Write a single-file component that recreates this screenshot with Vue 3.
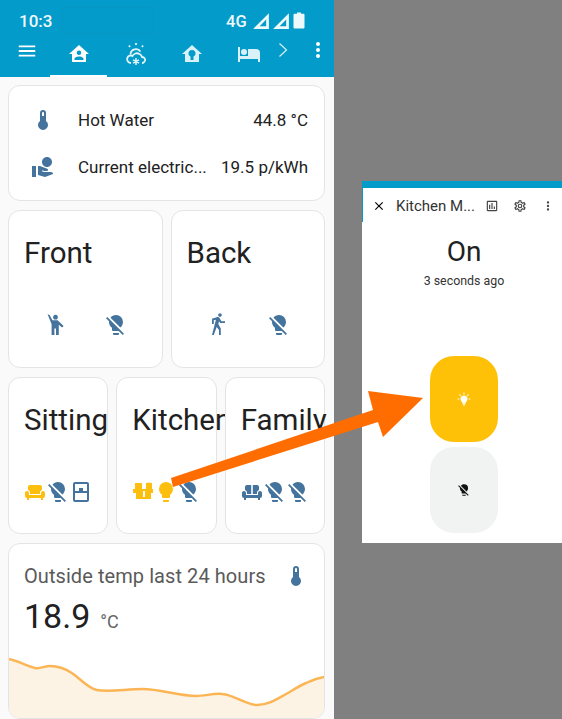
<script setup>
const icons = {
  thermo: "M15,13V5A3,3 0 0,0 9,5V13A5,5 0 1,0 15,13M12,4A1,1 0 0,1 13,5V8H11V5A1,1 0 0,1 12,4Z",
  hand: "M16 12C18.76 12 21 9.76 21 7S18.76 2 16 2 11 4.24 11 7 13.24 12 16 12M21.45 17.6C21.06 17.2 20.57 17 20 17H13L10.92 16.27L11.25 15.33L13 16H15.8C16.15 16 16.43 15.86 16.66 15.63S17 15.12 17 14.81C17 14.27 16.74 13.9 16.22 13.69L8.95 11H7V20L14 22L22.03 19C22.04 18.47 21.84 18 21.45 17.6M5 11H.984V22H5V11Z",
  bulbOff: "M12,2C9.76,2 7.78,3.05 6.5,4.68L16.31,14.5C17.94,13.21 19,11.24 19,9A7,7 0 0,0 12,2M3.28,4L2,5.27L5.04,8.3C5,8.53 5,8.76 5,9C5,11.38 6.19,13.47 8,14.74V17A1,1 0 0,0 9,18H14.73L18.73,22L20,20.72L3.28,4M9,20V21A1,1 0 0,0 10,22H14A1,1 0 0,0 15,21V20H9Z",
  bulb: "M12,2A7,7 0 0,0 5,9C5,11.38 6.19,13.47 8,14.74V17A1,1 0 0,0 9,18H15A1,1 0 0,0 16,17V14.74C17.81,13.47 19,11.38 19,9A7,7 0 0,0 12,2M9,21A1,1 0 0,0 10,22H14A1,1 0 0,0 15,21V20H9V21Z",
  bulbOn: "M12,6A6,6 0 0,1 18,12C18,14.22 16.79,16.16 15,17.2V19A1,1 0 0,1 14,20H10A1,1 0 0,1 9,19V17.2C7.21,16.16 6,14.22 6,12A6,6 0 0,1 12,6M14,21V22A1,1 0 0,1 13,23H11A1,1 0 0,1 10,22V21H14M20,11H23V13H20V11M1,11H4V13H1V11M13,1V4H11V1H13M4.92,3.5L7.05,5.64L5.63,7.05L3.5,4.93L4.92,3.5M16.95,5.63L19.07,3.5L20.5,4.93L18.36,7.05L16.95,5.63Z",
  greet: "M12.5,1.8A2.4,2.4 0 1,1 12.49,1.8M4.6,1.2L6.6,2L9.4,7.2H14.6L20.6,13L19,14.6L15.8,11.8V22H13V15.6H11.4V22H8.6V11.2Z",
  walk: "M14.12,10H19V8.2H15.38L13.38,4.87C13.08,4.37 12.54,4.03 11.92,4.03C11.74,4.03 11.58,4.06 11.42,4.11L6,5.8V11H7.8V7.33L9.91,6.67L6,22H7.8L10.67,13.89L13,17V22H14.8V15.59L12.31,11.05L13.04,8.18M14,3.8C15,3.8 15.8,3 15.8,2C15.8,1 15,0.2 14,0.2C13,0.2 12.2,1 12.2,2C12.2,3 13,3.8 14,3.8Z",
  armchair: "M7 5C5.9 5 5 5.9 5 7V10.1C6.2 10.5 7 11.6 7 12.9V14H17V12.9C17 11.6 17.8 10.5 19 10.1V7C19 5.9 18.1 5 17 5H7M4 11C2.9 11 2 11.9 2 13V16C2 17.1 2.9 18 4 18V20H6V18H18V20H20V18C21.1 18 22 17.1 22 16V13C22 11.9 21.1 11 20 11S18 11.9 18 13V15H6V13C6 11.9 5.1 11 4 11Z",
  sofa: "M7 5C5.9 5 5 5.9 5 7V10.1C6.2 10.5 7 11.6 7 12.9V14H11.2V5H7M12.8 5V14H17V12.9C17 11.6 17.8 10.5 19 10.1V7C19 5.9 18.1 5 17 5H12.8M4 11C2.9 11 2 11.9 2 13V16C2 17.1 2.9 18 4 18V20H6V18H18V20H20V18C21.1 18 22 17.1 22 16V13C22 11.9 21.1 11 20 11S18 11.9 18 13V15H6V13C6 11.9 5.1 11 4 11Z",
  fridge: "M6,2H18A2,2 0 0,1 20,4V20A2,2 0 0,1 18,22H6A2,2 0 0,1 4,20V4A2,2 0 0,1 6,2M6,4V11H10V8H14V11H18V4H6M6,13V20H18V13H6Z",
  door: "M4,3H11V9H15V3C17,2.6 19,2.6 21,3V9H22V13H20V19H5V13H2V9H4V3M12,11V17H14V11H12Z",
  menu: "M3,6H21V8H3V6M3,11H21V13H3V11M3,16H21V18H3V16Z",
  dots: "M12,16A2,2 0 0,1 14,18A2,2 0 0,1 12,20A2,2 0 0,1 10,18A2,2 0 0,1 12,16M12,10A2,2 0 0,1 14,12A2,2 0 0,1 12,14A2,2 0 0,1 10,12A2,2 0 0,1 12,10M12,4A2,2 0 0,1 14,6A2,2 0 0,1 12,8A2,2 0 0,1 10,6A2,2 0 0,1 12,4Z",
  homeAccount: "M12,3L2,12H5V20H19V12H22L12,3M12,8.5A2.25,2.25 0 0,1 14.25,10.75A2.25,2.25 0 0,1 12,13A2.25,2.25 0 0,1 9.75,10.75A2.25,2.25 0 0,1 12,8.5M12,14.5C13.5,14.5 16.5,15.25 16.5,16.75V18H7.5V16.75C7.5,15.25 10.5,14.5 12,14.5Z",
  homeBulb: "M12,3L2,12H5V20H19V12H22L12,3M12,8A3.5,3.5 0 0,1 15.5,11.5C15.5,12.8 14.8,13.8 13.5,14.5V18H10.5V14.5C9.2,13.8 8.5,12.8 8.5,11.5A3.5,3.5 0 0,1 12,8Z",
  bed: "M19,7H11V14H3V5H1V20H3V17H21V20H23V11A4,4 0 0,0 19,7M7,13A3,3 0 0,0 10,10A3,3 0 0,0 7,7A3,3 0 0,0 4,10A3,3 0 0,0 7,13Z",
  close: "M19,6.41L17.59,5L12,10.59L6.41,5L5,6.41L10.59,12L5,17.59L6.41,19L12,13.41L17.59,19L19,17.59L13.41,12L19,6.41Z",
  chart: "M9 17H7V10H9V17M13 17H11V7H13V17M17 17H15V13H17V17M19 19H5V5H19V19.1M19 3H5C3.9 3 3 3.9 3 5V19C3 20.1 3.9 21 5 21H19C20.1 21 21 20.1 21 19V5C21 3.9 20.1 3 19 3Z",
  cog: "M12,8A4,4 0 0,1 16,12A4,4 0 0,1 12,16A4,4 0 0,1 8,12A4,4 0 0,1 12,8M12,10A2,2 0 0,0 10,12A2,2 0 0,0 12,14A2,2 0 0,0 14,12A2,2 0 0,0 12,10M10,22C9.75,22 9.54,21.82 9.5,21.58L9.13,18.93C8.5,18.68 7.96,18.34 7.44,17.94L4.95,18.95C4.73,19.03 4.46,18.95 4.34,18.73L2.34,15.27C2.21,15.05 2.27,14.78 2.46,14.63L4.57,12.97L4.5,12L4.57,11L2.46,9.37C2.27,9.22 2.21,8.95 2.34,8.73L4.34,5.27C4.46,5.05 4.73,4.96 4.95,5.05L7.44,6.05C7.96,5.66 8.5,5.32 9.13,5.07L9.5,2.42C9.54,2.18 9.75,2 10,2H14C14.25,2 14.46,2.18 14.5,2.42L14.87,5.07C15.5,5.32 16.04,5.66 16.56,6.05L19.05,5.05C19.27,4.96 19.54,5.05 19.66,5.27L21.66,8.73C21.79,8.95 21.73,9.22 21.54,9.37L19.43,11L19.5,12L19.43,13L21.54,14.63C21.73,14.78 21.79,15.05 21.66,15.27L19.66,18.73C19.54,18.95 19.27,19.04 19.05,18.95L16.56,17.95C16.04,18.34 15.5,18.68 14.87,18.93L14.5,21.58C14.46,21.82 14.25,22 14,22H10M11.25,4L10.88,6.61C9.68,6.86 8.62,7.5 7.85,8.39L5.44,7.35L4.69,8.65L6.8,10.2C6.4,11.37 6.4,12.64 6.8,13.8L4.68,15.36L5.43,16.66L7.86,15.62C8.63,16.5 9.68,17.14 10.87,17.38L11.24,20H12.76L13.13,17.39C14.32,17.14 15.37,16.5 16.14,15.62L18.57,16.66L19.32,15.36L17.2,13.81C17.6,12.64 17.6,11.37 17.2,10.2L19.31,8.65L18.56,7.35L16.15,8.39C15.38,7.5 14.32,6.86 13.12,6.62L12.75,4H11.25Z",
}

const bigCards = [
  { name: "Front", icons: ["greet", "bulbOff"] },
  { name: "Back", icons: ["walk", "bulbOff"] },
]

const smallCards = [
  { name: "Sitting", icons: [{ d: "armchair", on: true }, { d: "bulbOff" }, { d: "fridge" }] },
  { name: "Kitchen", icons: [{ d: "door", on: true }, { d: "bulb", on: true }, { d: "bulbOff" }] },
  { name: "Family", icons: [{ d: "sofa" }, { d: "bulbOff" }, { d: "bulbOff" }] },
]

const sparkLine = "M0 1C9 3 18 8 26 10C31 11 36 8 41 8C50 8 57 11 63 15C72 21 79 30 88 32C100 34.5 118 31 134 31C152 31 170 38 188 38C197 38 205 35 214 36C226 37 238 47 249 47C260 47 269 41 278 36C285 32 291 28 298 25C304 22 310 20 316 19"
</script>

<template>
  <main class="page">
    <section class="phone">
      <header class="appbar">
        <div class="status">
          <span class="time">10:3</span>
          <span class="notch"></span>
          <span class="net">4G</span>
          <svg class="signal" viewBox="0 0 16 16"><path d="M15 1V15H1ZM12.6 6.6L6.8 12.6H12.6Z" fill-rule="evenodd" /></svg>
          <svg class="signal" viewBox="0 0 16 16"><path d="M15 1V15H1ZM12.6 6.6L6.8 12.6H12.6Z" fill-rule="evenodd" /></svg>
          <svg class="battery" viewBox="0 0 12 16"><path d="M4 0H8V1.2H10.5A1 1 0 0 1 11.5 2.2V15A1 1 0 0 1 10.5 16H1.5A1 1 0 0 1 .5 15V2.2A1 1 0 0 1 1.5 1.2H4Z" /></svg>
        </div>
        <nav class="tabs">
          <svg class="menu" viewBox="0 0 24 24"><path :d="icons.menu" /></svg>
          <div class="tab active"><svg viewBox="0 0 24 24"><path :d="icons.homeAccount" fill-rule="evenodd" /></svg></div>
          <div class="tab">
            <svg class="weather" viewBox="0 0 24 24" fill="none" stroke="#e3f5fa" stroke-width="1.8">
              <path d="M6.5 12.5A5.5 5.5 0 0 1 16.5 9.5" />
              <path d="M7 21C3.5 21 2.5 17.5 3.5 15.5C4.5 13.5 7 13 8.5 14C9.5 11.5 13 10.5 15.5 12C17 12.8 17.8 14 18 15C20.5 15 21.5 17 21 18.5C20.5 20 19.5 21 18 21" />
              <path d="M12 1V3M5 3.5L6 5M19 3.5L18 5" />
              <path d="M12 16V23M9 17.8L15 21.2M15 17.8L9 21.2" stroke-width="1.5" />
            </svg>
          </div>
          <div class="tab dim"><svg viewBox="0 0 24 24"><path :d="icons.homeBulb" fill-rule="evenodd" /></svg></div>
          <div class="tab dim"><svg viewBox="0 0 24 24"><path :d="icons.bed" /></svg></div>
          <svg class="chevron" viewBox="0 0 12 16" fill="none" stroke="#d9f1f8" stroke-width="1.2"><path d="M2.5 1.5L9.5 8L2.5 14.5" /></svg>
          <svg class="dots" viewBox="0 0 24 24"><path :d="icons.dots" /></svg>
        </nav>
      </header>

      <div class="content">
        <div class="card entities">
          <div class="entity">
            <svg class="ico entity-ico" viewBox="0 0 24 24"><path :d="icons.thermo" /></svg>
            <span class="entity-name">Hot Water</span>
            <span class="entity-value">44.8 °C</span>
          </div>
          <div class="entity">
            <svg class="ico entity-ico" viewBox="0 0 24 24"><path :d="icons.hand" /></svg>
            <span class="entity-name">Current electric...</span>
            <span class="entity-value">19.5 p/kWh</span>
          </div>
        </div>

        <div class="row two">
          <div v-for="c in bigCards" :key="c.name" class="card room big">
            <div class="room-name">{{ c.name }}</div>
            <div class="room-icons wide">
              <svg v-for="(ic, i) in c.icons" :key="i" class="ico" viewBox="0 0 24 24"><path :d="icons[ic]" /></svg>
            </div>
          </div>
        </div>

        <div class="row three">
          <div v-for="c in smallCards" :key="c.name" class="card room small">
            <div class="room-name">{{ c.name }}</div>
            <div class="room-icons">
              <svg v-for="(ic, i) in c.icons" :key="i" class="ico" :class="{ on: ic.on }" viewBox="0 0 24 24"><path :d="icons[ic.d]" fill-rule="evenodd" /></svg>
            </div>
          </div>
        </div>

        <div class="card graph">
          <div class="graph-head">
            <span>Outside temp last 24 hours</span>
            <svg class="ico" viewBox="0 0 24 24"><path :d="icons.thermo" /></svg>
          </div>
          <div class="graph-value"><span class="num">18.9</span><span class="unit">°C</span></div>
          <svg class="spark" viewBox="0 0 316 60" preserveAspectRatio="none">
            <path :d="sparkLine + 'V60H0Z'" fill="#fdf3e4" />
            <path :d="sparkLine" fill="none" stroke="#fbb554" stroke-width="2.5" />
          </svg>
        </div>
      </div>
    </section>

    <section class="dialog">
      <div class="dialog-strip"></div>
      <div class="dialog-bar">
        <svg viewBox="0 0 24 24" class="d-close"><path :d="icons.close" /></svg>
        <span class="d-title">Kitchen M...</span>
        <svg viewBox="0 0 24 24" class="d-ico"><path :d="icons.chart" /></svg>
        <svg viewBox="0 0 24 24" class="d-ico"><path :d="icons.cog" /></svg>
        <svg viewBox="0 0 24 24" class="d-ico"><path :d="icons.dots" /></svg>
      </div>
      <div class="d-state">On</div>
      <div class="d-ago">3 seconds ago</div>
      <div class="toggle on">
        <svg viewBox="0 0 24 24"><path :d="icons.bulbOn" /></svg>
      </div>
      <div class="toggle off">
        <svg viewBox="0 0 24 24"><path :d="icons.bulbOff" /></svg>
      </div>
    </section>

    <svg class="arrow" viewBox="0 0 562 719">
      <path d="M171 478L373 410L368 391L423 398L383 437L378 422L173 487Z" fill="#ff6d00" />
    </svg>
  </main>
</template>

<style scoped>
.page {
  position: relative;
  width: 562px;
  height: 719px;
  overflow: hidden;
  background: #808080;
  font-family: Roboto, "Liberation Sans", sans-serif;
  color: #212121;
}

.phone {
  width: 334px;
  height: 719px;
  background: #fafafa;
  overflow: hidden;
}

.appbar {
  height: 77px;
  background: #039bc9;
  color: #fff;
}

.status {
  display: flex;
  align-items: center;
  height: 40px;
  padding: 2px 0 0 19px;
  box-sizing: border-box;
}

.time {
  width: 43px;
  font-size: 17px;
  font-weight: 500;
  color: #eef9fc;
}

.notch {
  width: 91px;
  height: 27px;
  margin-top: -2px;
  box-sizing: border-box;
  border: 1px solid #0897c3;
}

.net {
  margin-left: 73px;
  font-size: 16.5px;
  font-weight: 500;
  color: #eef9fc;
}

.signal {
  width: 18px;
  height: 18px;
  margin-left: 2px;
  fill: #eef9fc;
}

.signal:first-of-type {
  margin-left: 5px;
}

.battery {
  width: 12px;
  height: 17px;
  margin-left: 3px;
  margin-top: -2px;
  fill: #eef9fc;
}

.tabs {
  display: flex;
  height: 37px;
  position: relative;
}

.tabs svg {
  fill: #fff;
}

.menu {
  width: 22px;
  height: 22px;
  margin: 0 0 0 16px;
}

.tab {
  width: 57px;
  height: 37px;
  box-sizing: border-box;
  display: flex;
  justify-content: center;
  padding-top: 2px;
}

.tab svg {
  width: 24px;
  height: 24px;
}

.tab:first-of-type {
  margin-left: 12px;
}

.tab:nth-of-type(3),
.tab:nth-of-type(4) {
  position: relative;
  left: -1px;
}

.tab.active {
  border-bottom: 2px solid #fff;
}

.tab.dim svg {
  fill: #d9f1f8;
}

.tabs .weather {
  fill: none;
}

.chevron {
  width: 12px;
  height: 16px;
  margin: 2px 0 0 -1px;
}

.tabs .chevron {
  fill: none;
}

.dots {
  width: 24px;
  height: 24px;
  margin: -2px 0 0 17px;
}

.content {
  padding: 8px 9px 0 8px;
  display: flex;
  flex-direction: column;
  gap: 9px;
}

.card {
  background: #fff;
  border: 1px solid #e4e4e4;
  border-radius: 12px;
  box-sizing: border-box;
}

.ico {
  width: 24px;
  height: 24px;
  fill: #44739e;
  flex: none;
}

.ico.on {
  fill: #fdbf0f;
}

.entities {
  height: 116px;
  padding: 19px 16px 0 0;
  display: flex;
  flex-direction: column;
  gap: 17px;
}

.entity {
  display: flex;
  align-items: center;
  height: 30px;
  font-size: 17px;
}

.entity-ico {
  margin: 0 23px 0 22px;
}

.entity-name {
  flex: 1;
  min-width: 0;
  white-space: nowrap;
}

.entity-value {
  white-space: nowrap;
}

.row {
  display: flex;
  gap: 8px;
}

/* text runs past the narrow cards and the next card paints over it */
.room {
  position: relative;
  flex: 1;
  min-width: 0;
  height: 158px;
  padding: 25px 0 0 15px;
  display: flex;
  flex-direction: column;
}

.row.three .room {
  height: 157px;
}

.room-name {
  font-size: 29.5px;
  line-height: 34px;
  white-space: nowrap;
}

.room-icons {
  display: flex;
  margin-top: 43px;
  margin-left: -1px;
}

.room-icons .ico {
  margin-right: -1px;
}

.room-icons.wide {
  margin-top: 43px;
  margin-left: 19px;
}

.room-icons.wide .ico {
  margin-right: 37px;
}

.graph {
  height: 176px;
  position: relative;
  overflow: hidden;
}

.graph-head {
  display: flex;
  justify-content: space-between;
  align-items: center;
  padding: 20px 16px 0 15px;
  font-size: 20px;
  line-height: 24px;
  letter-spacing: 0.07px;
  color: #5a5a5a;
}

.graph-value {
  padding: 6px 0 0 15px;
  line-height: 44px;
}

.num {
  font-size: 34px;
}

.unit {
  font-size: 18px;
  color: #666;
  margin-left: 10px;
}

.spark {
  position: absolute;
  left: 0;
  bottom: 0;
  width: 100%;
  height: 60px;
  display: block;
}

.dialog {
  position: absolute;
  left: 362px;
  top: 181px;
  width: 200px;
  height: 362px;
  background: #fff;
  box-sizing: border-box;
  padding-left: 4px;
  display: flex;
  flex-direction: column;
  align-items: center;
}

.dialog::before {
  content: "";
  position: absolute;
  left: 0;
  top: 0;
  width: 1px;
  height: 41px;
  background: #039bc9;
}

.dialog-strip {
  height: 7px;
  width: 200px;
  margin-left: -4px;
  background: #039bc9;
  flex: none;
}

.dialog-bar {
  display: flex;
  align-items: center;
  width: 200px;
  margin-left: -4px;
  height: 36px;
  box-sizing: border-box;
  padding: 0 7px 0 10px;
  flex: none;
}

.d-close {
  width: 14px;
  height: 14px;
  flex: none;
}

.d-title {
  flex: 1;
  min-width: 0;
  margin-left: 10px;
  font-size: 15px;
  white-space: nowrap;
  color: #333;
}

.d-ico {
  width: 14px;
  height: 14px;
  flex: none;
  margin-left: 14px;
  fill: #444;
}

.d-state {
  margin-top: 11px;
  font-size: 28px;
  line-height: 34px;
  color: #212121;
}

.d-ago {
  margin-top: 4px;
  font-size: 12.4px;
  line-height: 16px;
  color: #333;
}

.toggle {
  width: 68px;
  height: 86px;
  border-radius: 24px;
  display: flex;
  align-items: center;
  justify-content: center;
}

.toggle svg {
  width: 14px;
  height: 14px;
}

.toggle.on {
  margin-top: 67px;
  background: #ffc107;
  fill: #fff;
}

.toggle.off {
  margin-top: 5px;
  background: #f1f2f2;
  fill: #111;
}

.arrow {
  position: absolute;
  left: 0;
  top: 0;
  width: 562px;
  height: 719px;
  pointer-events: none;
}
</style>
